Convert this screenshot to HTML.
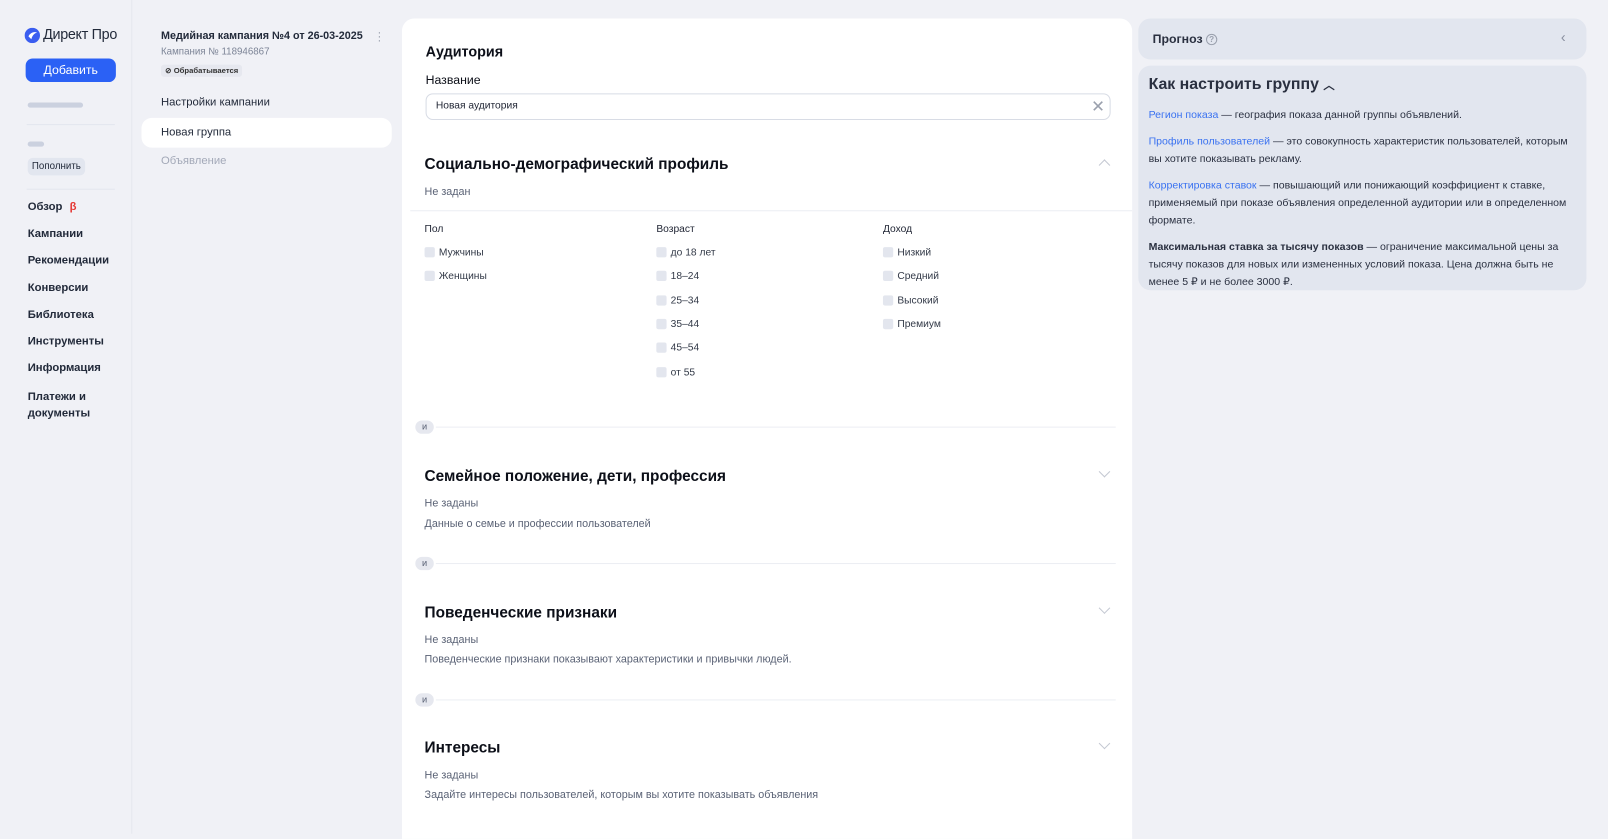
<!DOCTYPE html>
<html><head><meta charset="utf-8"><style>
*{box-sizing:border-box;margin:0;padding:0}
body{width:1608px;height:813px;overflow:hidden;background:#f0f1f6;font-family:"Liberation Sans",sans-serif;color:#1f2433;position:relative}
#w{position:absolute;left:0;top:0;width:1568px;height:793px;transform:scale(1.02551);transform-origin:0 0}
.a{position:absolute;white-space:nowrap}
.nav{font-size:11px;font-weight:bold;color:#222a3a}
.card{position:absolute;left:392px;top:18px;width:712px;height:800px;background:#fff;border-radius:12px 12px 0 0}
.h{font-size:15px;font-weight:bold;color:#0c0f18}
.g{font-size:10.5px;color:#5a6275}
.cb{position:absolute;font-size:10px;color:#333a48}
.cb:before{content:"";position:absolute;left:-14px;top:0;width:10px;height:10px;background:#e3e6ee;border-radius:2px}
.hr{position:absolute;height:1px;background:#eceef3}
.and{position:absolute;width:18px;height:13px;border-radius:7px;background:#e6e8ef;font-size:9px;color:#5a6275;text-align:center;line-height:13px}
.chev{position:absolute;width:8px;height:8px;border-right:1px solid #c4c8d2;border-bottom:1px solid #c4c8d2}
.rp{position:absolute;left:1110px;width:437px;background:#e2e6ef;border-radius:12px}
.rt{font-size:10.3px;line-height:17px;color:#2a3040;margin:0 10px 9px 10px}
.rt a{color:#3a72f0;text-decoration:none}
</style></head><body><div id="w">
<div class="a" style="left:128px;top:0;width:1px;height:813px;background:#e6e8ee"></div>
<svg class="a" style="left:24px;top:27px" width="15" height="15" viewBox="0 0 16 16"><circle cx="8" cy="8" r="8" fill="#3a5df0"/><path d="M4 9c2-4 6-5 9-4-3 1-5 3-6 7" fill="#fff"/></svg>
<div class="a" style="left:42px;top:25px;font-size:14px;letter-spacing:-0.3px;color:#222a3a">Директ Про</div>
<div class="a" style="left:25px;top:57px;width:88px;height:23px;background:#2b61f5;border-radius:7px;color:#fff;font-size:12px;text-align:center;line-height:23px">Добавить</div>
<div class="a" style="left:27px;top:100px;width:54px;height:5px;background:#cbd1df;border-radius:3px"></div>
<div class="a" style="left:26px;top:121px;width:86px;height:1px;background:#e3e6ee"></div>
<div class="a" style="left:27px;top:138px;width:16px;height:5px;background:#cbd1df;border-radius:3px"></div>
<div class="a" style="left:27px;top:154px;width:56px;height:17px;background:#e2e6ef;border-radius:5px;font-size:9.5px;line-height:17px;text-align:center;color:#222a3a">Пополнить</div>
<div class="a" style="left:26px;top:184px;width:86px;height:1px;background:#e3e6ee"></div>
<div class="a nav" style="left:27px;top:196px">Обзор <span style="color:#e53935;margin-left:4px">β</span></div>
<div class="a nav" style="left:27px;top:222px">Кампании</div>
<div class="a nav" style="left:27px;top:248px">Рекомендации</div>
<div class="a nav" style="left:27px;top:275px">Конверсии</div>
<div class="a nav" style="left:27px;top:301px">Библиотека</div>
<div class="a nav" style="left:27px;top:327px">Инструменты</div>
<div class="a nav" style="left:27px;top:353px">Информация</div>
<div class="a nav" style="left:27px;top:379px;line-height:16px;white-space:normal;width:80px">Платежи и документы</div>
<div class="a" style="left:157px;top:29px;font-size:10.5px;font-weight:bold;color:#222a3a">Медийная кампания №4 от 26-03-2025</div>
<div class="a" style="left:368px;top:29px;font-size:12px;color:#9aa0ad;line-height:4px">·<br>·<br>·</div>
<div class="a" style="left:157px;top:45px;font-size:9.5px;color:#7c8496">Кампания № 118946867</div>
<div class="a" style="left:157px;top:63px;height:12px;padding:0 4px;background:#e6e8ef;border-radius:3px;font-size:7.5px;line-height:12px;font-weight:bold;color:#333">⊘ Обрабатывается</div>
<div class="a" style="left:157px;top:94px;font-size:11px;color:#222a3a">Настройки кампании</div>
<div class="a" style="left:138px;top:115px;width:244px;height:29px;background:#fff;border-radius:10px"></div>
<div class="a" style="left:157px;top:123px;font-size:11px;color:#222a3a">Новая группа</div>
<div class="a" style="left:157px;top:151px;font-size:11px;color:#a3a9b8">Объявление</div>
<div class="card"></div>
<div class="a h" style="left:415px;top:42px;font-size:14px">Аудитория</div>
<div class="a" style="left:415px;top:71px;font-size:12px;color:#0c0f18">Название</div>
<div class="a" style="left:415px;top:91px;width:668px;height:26px;border:1px solid #d8dce5;border-radius:7px;font-size:10px;line-height:24px;padding-left:9px">Новая аудитория</div>
<div class="a" style="left:1064px;top:94px;font-size:16px;color:#9aa0ad">✕</div>
<div class="a h" style="left:414px;top:152px">Социально-демографический профиль</div>
<div class="chev" style="left:1073px;top:157px;transform:rotate(225deg)"></div>
<div class="a g" style="left:414px;top:181px">Не задан</div>
<div class="hr" style="left:400px;top:205px;width:704px"></div>
<div class="a" style="left:414px;top:218px;font-size:10px">Пол</div>
<div class="a" style="left:640px;top:218px;font-size:10px">Возраст</div>
<div class="a" style="left:861px;top:218px;font-size:10px">Доход</div>
<div class="cb" style="left:428px;top:241px">Мужчины</div>
<div class="cb" style="left:428px;top:264px">Женщины</div>
<div class="cb" style="left:654px;top:241px">до 18 лет</div>
<div class="cb" style="left:654px;top:264px">18–24</div>
<div class="cb" style="left:654px;top:288px">25–34</div>
<div class="cb" style="left:654px;top:311px">35–44</div>
<div class="cb" style="left:654px;top:334px">45–54</div>
<div class="cb" style="left:654px;top:358px">от 55</div>
<div class="cb" style="left:875px;top:241px">Низкий</div>
<div class="cb" style="left:875px;top:264px">Средний</div>
<div class="cb" style="left:875px;top:288px">Высокий</div>
<div class="cb" style="left:875px;top:311px">Премиум</div>
<div class="and" style="left:405px;top:410px">и</div><div class="hr" style="left:425px;top:416px;width:663px"></div>
<div class="a h" style="left:414px;top:456px">Семейное положение, дети, профессия</div>
<div class="chev" style="left:1073px;top:456px;transform:rotate(45deg)"></div>
<div class="a g" style="left:414px;top:485px">Не заданы</div>
<div class="a g" style="left:414px;top:505px">Данные о семье и профессии пользователей</div>
<div class="and" style="left:405px;top:543px">и</div><div class="hr" style="left:425px;top:549px;width:663px"></div>
<div class="a h" style="left:414px;top:589px">Поведенческие признаки</div>
<div class="chev" style="left:1073px;top:589px;transform:rotate(45deg)"></div>
<div class="a g" style="left:414px;top:618px">Не заданы</div>
<div class="a g" style="left:414px;top:637px">Поведенческие признаки показывают характеристики и привычки людей.</div>
<div class="and" style="left:405px;top:676px">и</div><div class="hr" style="left:425px;top:682px;width:663px"></div>
<div class="a h" style="left:414px;top:721px">Интересы</div>
<div class="chev" style="left:1073px;top:721px;transform:rotate(45deg)"></div>
<div class="a g" style="left:414px;top:750px">Не заданы</div>
<div class="a g" style="left:414px;top:769px">Задайте интересы пользователей, которым вы хотите показывать объявления</div>
<div class="rp" style="top:18px;height:40px"><div class="a" style="left:14px;top:13px;font-size:12px;font-weight:bold;color:#2a3040">Прогноз <span style="display:inline-block;width:11px;height:11px;border:1px solid #9aa0ad;border-radius:50%;font-size:8px;line-height:9px;text-align:center;color:#9aa0ad;vertical-align:middle">?</span></div><div class="a" style="left:412px;top:10px;font-size:14px;color:#8a90a0">‹</div></div>
<div class="rp" style="top:64px;height:219px;padding-top:10px">
<div style="font-size:15.5px;font-weight:bold;color:#2a3040;margin:0 10px 12px 10px">Как настроить группу <span style="font-size:11px">︿</span></div>
<div class="rt"><a>Регион показа</a> — география показа данной группы объявлений.</div>
<div class="rt"><a>Профиль пользователей</a> — это совокупность характеристик пользователей, которым вы хотите показывать рекламу.</div>
<div class="rt"><a>Корректировка ставок</a> — повышающий или понижающий коэффициент к ставке, применяемый при показе объявления определенной аудитории или в определенном формате.</div>
<div class="rt"><b>Максимальная ставка за тысячу показов</b> — ограничение максимальной цены за тысячу показов для новых или измененных условий показа. Цена должна быть не менее 5 ₽ и не более 3000 ₽.</div>
</div>
</div></body></html>
